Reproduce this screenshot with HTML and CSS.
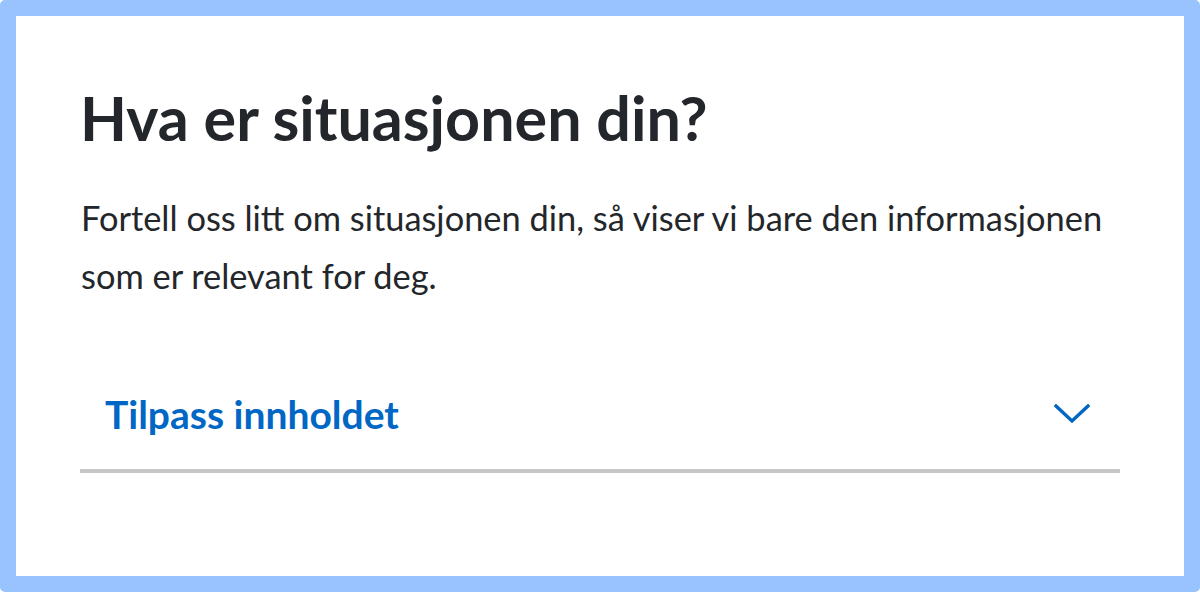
FILE: index.html
```html
<!DOCTYPE html>
<html lang="no">
<head>
<meta charset="utf-8">
<title>Hva er situasjonen din?</title>
<link rel="stylesheet" href="styles.css">
</head>
<body>
<section class="panel">
  <h1 class="panel-title">Hva er situasjonen din?</h1>
  <p class="panel-text">Fortell oss litt om situasjonen din, så viser vi bare den informasjonen som er relevant for deg.</p>
  <div class="expand">
    <button class="expand-header" type="button">
      <span class="expand-label">Tilpass innholdet</span>
      <svg class="expand-chevron" width="36" height="20" viewBox="0 0 36 20" aria-hidden="true">
        <polyline points="2,2 18,17 34,2" fill="none" stroke="currentColor" stroke-width="3.4" stroke-linecap="square"/>
      </svg>
    </button>
  </div>
</section>
</body>
</html>
```
FILE: styles.css
```css
html, body {
  margin: 0;
  padding: 0;
  background: #ffffff;
}

.panel {
  box-sizing: border-box;
  width: 1200px;
  height: 592px;
  border: 16px solid #99c3ff;
  border-radius: 5px;
  background: #ffffff;
  padding: 66px 64px 0 64px;
  font-family: "Lato", "Liberation Sans", sans-serif;
  color: #23262a;
}

.panel-title {
  margin: 0;
  font-size: 61px;
  font-weight: 700;
  line-height: 72px;
}

.panel-text {
  margin: 35px 0 0 1px;
  font-size: 34.4px;
  line-height: 58px;
}

.expand {
  margin-top: 56px;
  border-bottom: 4px solid #c6c6c6;
}

.expand-header {
  display: flex;
  align-items: center;
  justify-content: space-between;
  width: 100%;
  margin: 0;
  padding: 30px 30px 31px 25px;
  border: 0;
  background: transparent;
  font: inherit;
  line-height: 1.2;
  color: #0067c5;
  cursor: pointer;
}

.expand-label {
  font-size: 39px;
  font-weight: 700;
}

.expand-chevron {
  display: block;
}
```
